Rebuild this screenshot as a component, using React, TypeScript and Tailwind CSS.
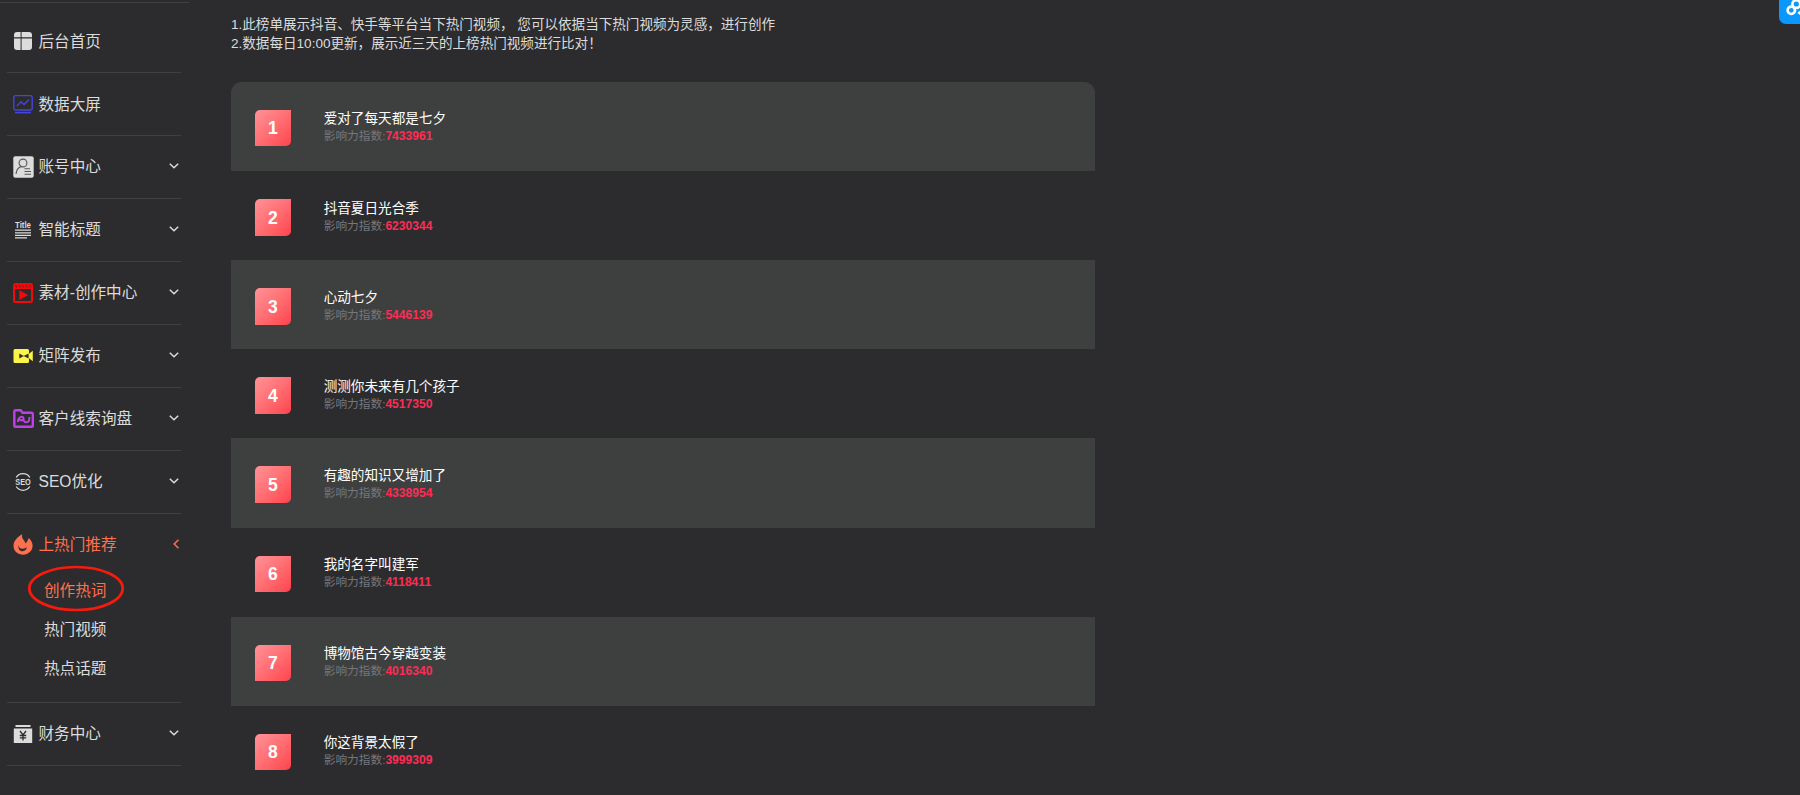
import React from "react";

type MenuItem = {
  label: string;
  icon: React.ReactNode;
  expandable?: boolean;
};

const HomeIcon = () => (
  <svg viewBox="0 0 20 20" className="h-5 w-5" fill="#dcdcdc">
    <path d="M4 1h3.600v5.200H1V4a3 3 0 0 1 3-3zM8.600 1H16a3 3 0 0 1 3 3v2.200H8.600zM1 7.400h6.600V19H4a3 3 0 0 1-3-3zM8.600 7.400H19V16a3 3 0 0 1-3 3H8.600z" />
  </svg>
);

const ScreenIcon = () => (
  <svg viewBox="0 0 20 20" className="h-5 w-5" fill="none" stroke="#4545dc" strokeWidth="1.400">
    <rect x="0.800" y="1.600" width="18.400" height="14.400" rx="1.600" />
    <path d="M4 12l4-4.300 3 2.800L16 5.500" />
    <path d="M2 18.600h16" strokeWidth="1.600" />
  </svg>
);

const AccountIcon = () => (
  <svg viewBox="0 0 21 22" className="h-[22px] w-[21px]">
    <rect x="0.300" y="0.300" width="20.400" height="21.400" rx="2" fill="#dcdcdc" />
    <g fill="none" stroke="#55565a" strokeWidth="1.100">
      <circle cx="10" cy="7" r="3.900" />
      <path d="M3 18c.3-4 2.200-6.500 5.500-7.500M11.500 12.800H17M11.500 15.500H18M11.500 18.200H18" />
    </g>
  </svg>
);

const TitleIcon = () => (
  <svg viewBox="0 0 20 20" className="h-5 w-5" fill="#dcdcdc">
    <text x="10" y="8" textAnchor="middle" fontSize="8.400" fontWeight="700" fontFamily="Liberation Sans" textLength="16" lengthAdjust="spacingAndGlyphs">
      Title
    </text>
    <path d="M2 9.600h16v1.200H2zM2 12.200h16v1.200H2zM2 14.800h16v1.200H2zM2 17.200h12v1.200H2z" />
  </svg>
);

const MaterialIcon = () => (
  <svg viewBox="0 0 20 20" className="h-5 w-5">
    <rect width="20" height="20" rx="2.500" fill="#f50808" />
    <path d="M2 6h16v12H2z" fill="#2c2c2e" />
    <path d="M2.500 2l1.200 2.500M6 2l1.200 2.500M9.500 2l1.200 2.500M13 2l1.200 2.500M16.500 2l1 2.500" stroke="#2c2c2e" strokeWidth=".8" />
    <path d="M6.300 7.300v9.600l8.900-4.800z" fill="#f50808" />
  </svg>
);

const PublishIcon = () => (
  <svg viewBox="0 0 20 20" className="h-5 w-5" fill="#fbf547">
    <path d="M2 3h12.500a1.500 1.500 0 0 1 1.500 1.500v3.300l3.800-3v10.400L16 12.200v3.300a1.500 1.500 0 0 1-1.500 1.500H2A1.500 1.500 0 0 1 .5 15.500v-11A1.500 1.500 0 0 1 2 3z" />
    <path d="M6.300 7.400v5.200l4.500-2.600zM10.600 10l5-2.500v5z" fill="#2c2c2e" />
  </svg>
);

const ClueIcon = () => (
  <svg viewBox="0 0 21 19" className="h-[19px] w-[21px]" fill="none" stroke="#bd40ea">
    <path d="M1.300 2.500a1.300 1.300 0 0 1 1.300-1.300h5l2 2.500h9a1.300 1.300 0 0 1 1.200 1.300v11.500a1.300 1.300 0 0 1-1.300 1.300H2.600a1.300 1.300 0 0 1-1.300-1.300z" strokeWidth="2.400" />
    <path d="M5 13C4.600 7.800 10.300 6.300 10.500 9.300c.1 2.700-3.900 2.900-3.700.5M10.500 9.300c-.5 5.500 5.900 5.200 5.900 0V8" strokeWidth="1.900" />
  </svg>
);

const SeoIcon = () => (
  <svg viewBox="0 0 20 20" className="h-5 w-5" fill="none" stroke="#dcdcdc" strokeWidth="1.300">
    <path d="M3.200 5.500a8 8 0 0 1 13.600 0M3.200 14.500a8 8 0 0 0 13.600 0" />
    <text x="10" y="13.100" textAnchor="middle" fontSize="8.800" fontWeight="700" fontFamily="Liberation Sans" stroke="none" fill="#dcdcdc" textLength="15.500" lengthAdjust="spacingAndGlyphs">
      SEO
    </text>
  </svg>
);

const FireIcon = () => (
  <svg viewBox="0 0 20 21" className="h-[21px] w-5" fill="#ff704f">
    <path d="M9.200.2c-.5 2.800.2 4.300 1.500 5.900.9 1.100 1.500 2.100 1.600 3.500 1.500-1.400 2.600-3.300 3.400-5.700 2.600 2.300 3.900 4.900 3.900 7.700 0 5.300-4.200 9.100-9.500 9.100S.5 17 .5 11.700C.5 6.800 4.500 3 9.200.2z" />
    <path d="M5.600 10.900c.1 2.400 1.500 3.800 3.800 3.900 1.800.1 3.200-.5 4.400-1.700-.2 2.600-1.900 4.200-4.300 4.100-2.800-.1-4.700-2.900-3.900-6.300z" fill="#2c2c2e" />
  </svg>
);

const FinanceIcon = () => (
  <svg viewBox="0 0 20 20" className="h-5 w-5">
    <path d="M2.500 1h15v2h-15zM.8 4.500h18.400V19H.8z" fill="#dcdcdc" />
    <path d="M7 7l3 4 3-4M10 11v5.500M6.800 11.500h6.400M6.800 13.800h6.400" fill="none" stroke="#2c2c2e" strokeWidth="1.300" />
  </svg>
);

const Chevron = () => (
  <svg viewBox="0 0 10 10" className="mb-[2px] ml-auto h-[10px] w-[10px]" fill="none" stroke="#dcdcdc" strokeWidth="1.500">
    <path d="M.8 2.800L5 6.800l4.200-4" />
  </svg>
);

const menu: MenuItem[] = [
  { label: "后台首页", icon: <HomeIcon /> },
  { label: "数据大屏", icon: <ScreenIcon /> },
  { label: "账号中心", icon: <AccountIcon />, expandable: true },
  { label: "智能标题", icon: <TitleIcon />, expandable: true },
  { label: "素材-创作中心", icon: <MaterialIcon />, expandable: true },
  { label: "矩阵发布", icon: <PublishIcon />, expandable: true },
  { label: "客户线索询盘", icon: <ClueIcon />, expandable: true },
  { label: "SEO优化", icon: <SeoIcon />, expandable: true },
];

const hotWords = [
  { title: "爱对了每天都是七夕", score: 7433961 },
  { title: "抖音夏日光合季", score: 6230344 },
  { title: "心动七夕", score: 5446139 },
  { title: "测测你未来有几个孩子", score: 4517350 },
  { title: "有趣的知识又增加了", score: 4338954 },
  { title: "我的名字叫建军", score: 4118411 },
  { title: "博物馆古今穿越变装", score: 4016340 },
  { title: "你这背景太假了", score: 3999309 },
];

const MenuRow = ({ label, icon, expandable }: MenuItem) => (
  <div className="ml-[7px] flex h-[62.95px] w-[174px] items-center border-b border-[#404042] pr-[2px] pl-[5px]">
    <span className="flex w-[22px] shrink-0 justify-center">{icon}</span>
    <span className="ml-[4.500px]">{label}</span>
    {expandable && <Chevron />}
  </div>
);

const Sidebar = () => (
  <aside className="w-[189px] shrink-0 pt-[2px] text-[15.6px] leading-none text-[#dcdcdc]">
    <div className="h-px bg-[#404042]" />
    <div className="pt-[7.400px]">
      {menu.map(item => (
        <MenuRow key={item.label} {...item} />
      ))}
    </div>
    <div className="ml-[7px] h-[189px] w-[174px] border-b border-[#404042]">
      <div className="flex h-[62px] items-center pr-[2px] pl-[5px] text-[#ff704f]">
        <span className="flex w-[22px] shrink-0 justify-center">
          <FireIcon />
        </span>
        <span className="ml-[4.500px]">上热门推荐</span>
        <svg viewBox="0 0 10 10" className="-mr-[2px] mb-[2px] ml-auto h-[10px] w-[10px]" fill="none" stroke="#ff704f" strokeWidth="1.500">
          <path d="M7.500 .8L3.200 5l4.300 4.200" />
        </svg>
      </div>
      <div className="relative flex h-[30px] items-center pl-[37px] text-[#ff704f]">
        创作热词
        <svg viewBox="0 0 98 48" className="absolute top-[-11px] left-[20px] h-12 w-[98px]" fill="none" stroke="#f71b0d" strokeWidth="2.700">
          <ellipse cx="49" cy="23.500" rx="46.700" ry="21.500" />
        </svg>
      </div>
      <div className="flex h-[47px] items-center pl-[37px]">热门视频</div>
      <div className="flex h-[31px] items-center pl-[37px]">热点话题</div>
    </div>
    <MenuRow label="财务中心" icon={<FinanceIcon />} expandable />
  </aside>
);

const HotWordList = () => (
  <div className="mt-[28.400px] w-[864px] overflow-hidden rounded-t-[11px]">
    {hotWords.map((word, index) => (
      <div key={word.title} className="flex h-[89.15px] items-start pt-[28px] pl-[23.500px] odd:bg-[#3e403f]">
        <div className="flex h-[36.5px] w-[36.5px] items-center justify-center rounded-tl-[5px] rounded-br-[5px] bg-linear-to-br from-[#ff9297] to-[#ff404d] pt-[2px] text-[17.5px] leading-none font-bold text-white">
          {index + 1}
        </div>
        <div className="ml-[32.700px] pt-[0.6px]">
          <div className="text-[13.6px] leading-[18px] text-white">{word.title}</div>
          <div className="text-[11.7px] leading-[15px] text-[#75777e]">
            影响力指数:<span className="text-[12.1px] font-bold text-[#fe2c55]">{word.score}</span>
          </div>
        </div>
      </div>
    ))}
  </div>
);

export default function App() {
  return (
    <div className="relative flex h-[795px] overflow-hidden bg-[#2c2c2e] font-['Liberation_Sans','Noto_Sans_CJK_SC',sans-serif]">
      <Sidebar />
      <main className="pt-[14.500px] pl-[42px]">
        <div className="text-[13.57px] leading-[19.500px] text-[#dcdcdc]">
          <p>1.此榜单展示抖音、快手等平台当下热门视频， 您可以依据当下热门视频为灵感，进行创作</p>
          <p>2.数据每日10:00更新，展示近三天的上榜热门视频进行比对！</p>
        </div>
        <HotWordList />
      </main>
      <div className="absolute top-0 right-0 h-6 w-[21px] overflow-hidden rounded-bl-[7px] bg-[#0a98ff]">
        <svg viewBox="0 0 21 24" className="h-6 w-[21px]" fill="none" stroke="#fff" strokeWidth="2.600">
          <circle cx="12.300" cy="10.300" r="3.700" />
          <circle cx="17.300" cy="4" r="3.900" />
          <path d="M19.300 12l3 2.500" />
        </svg>
      </div>
    </div>
  );
}
